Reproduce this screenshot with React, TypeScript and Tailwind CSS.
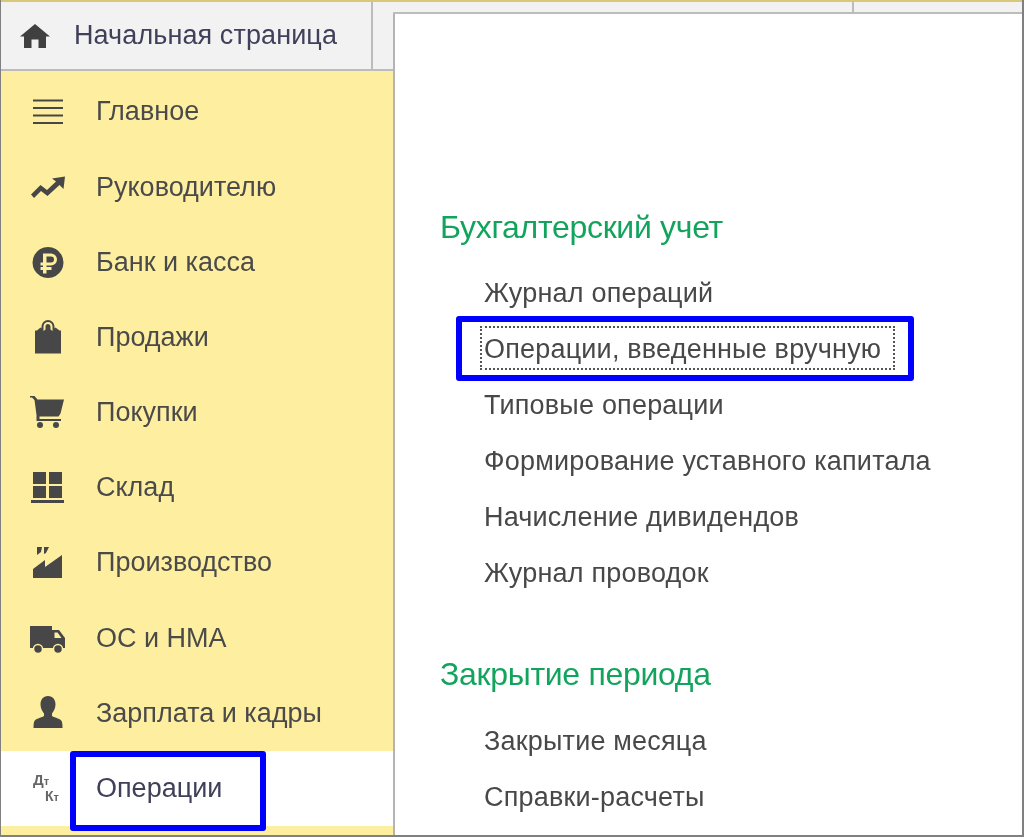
import type { ReactNode } from "react";

const iconClass = "w-[36px] h-[36px] fill-[#474747]";

const MenuIcon = () => (
  <svg viewBox="0 0 36 36" className={iconClass}>
    <rect x="3" y="5.5" width="30" height="2" />
    <rect x="3" y="13" width="30" height="2" />
    <rect x="3" y="20.5" width="30" height="2" />
    <rect x="3" y="28" width="30" height="2" />
  </svg>
);

const TrendIcon = () => (
  <svg viewBox="0 0 36 36" className={iconClass}>
    <path d="M1 25.5 L10.5 16 L17 21 L26 12.5 L22 9.5 L35 7.5 L33.5 20 L29.5 16 L17.5 27 L11 22 L4 29 Z" />
  </svg>
);

const RubleIcon = () => (
  <svg viewBox="0 0 36 36" className={iconClass}>
    <path
      fillRule="evenodd"
      d="M18 3 a15.5 15.5 0 1 0 0.01 0 Z M13 9.5 h8 a6 6 0 0 1 0 12 h-4.5 v1.5 h5 v3 h-5 v3.5 h-3.5 v-3.5 h-2.5 v-3 h2.5 v-1.500 h-2.500 v-3 h2.500 Z M16.500 12.500 v6 h4.500 a3 3 0 0 0 0 -6 Z"
    />
  </svg>
);

const BagIcon = () => (
  <svg viewBox="0 0 36 36" className={iconClass}>
    <path
      fillRule="evenodd"
      d="M11.500 9.500 v-2 a6.500 6.500 0 0 1 13 0 v2 l1 -1 l4 3 h1.500 v23 h-26 v-23 h2 l3.500 -3 Z M13.500 12 l2 -1.500 v-3 a2.500 2.500 0 0 1 5 0 v3 l2 1.500 v-4.500 a4.500 4.500 0 0 0 -9 0 Z"
    />
  </svg>
);

const CartIcon = () => (
  <svg viewBox="0 0 36 36" className={iconClass}>
    <path d="M0 2 h4.500 l3 3.500 h26.500 l-3.500 14 l-2 3 h-19 v2.500 h21.500 v2 h-24.500 v-6 l-2 -15 l-2.500 -2.500 h-2 Z" />
    <circle cx="10" cy="31" r="3" />
    <circle cx="26" cy="31" r="3" />
  </svg>
);

const GridIcon = () => (
  <svg viewBox="0 0 36 36" className={iconClass}>
    <rect x="3" y="2" width="13" height="12" />
    <rect x="19" y="2" width="13" height="12" />
    <rect x="3" y="16" width="13" height="12" />
    <rect x="19" y="16" width="13" height="12" />
    <rect x="1" y="30" width="33" height="3" />
  </svg>
);

const FactoryIcon = () => (
  <svg viewBox="0 0 36 36" className={iconClass}>
    <path d="M3 33 v-9 l12 -9 v7 l17 -12 v23 Z" />
    <path d="M7 2 h5 l-1 5 l-4 3 Z" />
    <path d="M14 2 h5 l-3 6 l-2 1 Z" />
  </svg>
);

const TruckIcon = () => (
  <svg viewBox="0 0 36 36" className={iconClass}>
    <path
      fillRule="evenodd"
      d="M0 6 h22 v4 h7 l6 8 v10 h-35 Z M24.500 12.500 v5.500 h7 l-4 -5.500 Z"
    />
    <circle cx="8" cy="29" r="4.500" stroke="#fdeea0" strokeWidth="1.500" />
    <circle cx="28" cy="29" r="4.500" stroke="#fdeea0" strokeWidth="1.500" />
  </svg>
);

const PersonIcon = () => (
  <svg viewBox="0 0 36 36" className={iconClass}>
    <path d="M18 1 c5 0 7.500 4 7.500 8.500 c0 4 -2 7 -3.500 9 v2.500 c3 2 9 2.500 10 6 c0.500 2 0.500 4 0.500 6 h-29 c0 -2 0 -4 0.500 -6 c1 -3.500 7 -4 10 -6 v-2.500 c-1.500 -2 -3.500 -5 -3.500 -9 c0 -4.500 2.500 -8.500 7.500 -8.500 Z" />
  </svg>
);

const DtKtIcon = () => (
  <div className="w-[36px] h-[36px] relative font-['Liberation_Sans',sans-serif] font-bold text-[#666666] leading-none">
    <span className="absolute left-[3px] top-[2px] text-[15px]">Д<span className="text-[11px]">т</span></span>
    <span className="absolute left-[15px] top-[19px] text-[14px]">К<span className="text-[11px]">т</span></span>
  </div>
);

const sidebarItems: { label: string; icon: ReactNode; active?: boolean }[] = [
  { label: "Главное", icon: <MenuIcon /> },
  { label: "Руководителю", icon: <TrendIcon /> },
  { label: "Банк и касса", icon: <RubleIcon /> },
  { label: "Продажи", icon: <BagIcon /> },
  { label: "Покупки", icon: <CartIcon /> },
  { label: "Склад", icon: <GridIcon /> },
  { label: "Производство", icon: <FactoryIcon /> },
  { label: "ОС и НМА", icon: <TruckIcon /> },
  { label: "Зарплата и кадры", icon: <PersonIcon /> },
  { label: "Операции", icon: <DtKtIcon />, active: true },
];

const SectionLink = ({ children, focused }: { children: string; focused?: boolean }) => (
  <div className="h-[56px] flex items-center pl-[44px] text-[27px] text-[#484848] tracking-[0.2px] relative">
    {focused && (
      <>
        <div className="absolute left-[16px] top-[-5px] w-[458px] h-[65px] border-[6px] border-[#0000ff] rounded-[3px]" />
        <div className="absolute left-[40px] top-[5px] w-[415px] h-[44px] border-2 border-dotted border-[#555555]" />
      </>
    )}
    <span className="relative">{children}</span>
  </div>
);

const SectionTitle = ({ children }: { children: string }) => (
  <div className="text-[32px] leading-[40px] text-[#12a45c] tracking-[-0.3px]">{children}</div>
);

export default function App() {
  return (
    <div className="w-[1024px] h-[837px] flex overflow-hidden bg-white border-l border-r-2 border-b-2 border-[#808080] font-['Liberation_Sans',sans-serif] blur-[0.4px]">
      <div className="w-[392px] shrink-0 flex flex-col">
        <div className="h-[71px] shrink-0 flex bg-[#f2f2f2] border-t-2 border-t-[#d8c878] border-b-2 border-b-[#bcbcbc]">
          <div className="w-[372px] flex items-center border-r-2 border-[#bcbcbc]">
            <svg viewBox="0 0 32 26" className="w-[32px] h-[26px] ml-[18px] fill-[#404040]">
              <path d="M16 1 L31 13.500 H27 V25 H19.500 V16.500 H12.500 V25 H5 V13.500 H1 Z" />
            </svg>
            <span className="ml-[23px] text-[27px] text-[#40405a] tracking-[0.1px]">Начальная страница</span>
          </div>
        </div>
        <div className="flex-1 bg-[#fdeea0] pt-[3px] flex flex-col">
          {sidebarItems.map((item) => (
            <div
              key={item.label}
              className={`h-[75.2px] shrink-0 flex items-center pl-[29px] relative ${item.active ? "bg-white" : ""}`}
            >
              {item.icon}
              <span className={`ml-[30px] text-[27px] relative ${item.active ? "text-[#40405a]" : "text-[#4a4a4a]"}`}>
                {item.label}
              </span>
              {item.active && (
                <div className="absolute left-[69px] top-0 w-[196px] h-[80px] border-[6px] border-[#0000ff] rounded-[3px]" />
              )}
            </div>
          ))}
        </div>
      </div>
      <div className="flex-1 flex flex-col min-w-0">
        <div className="h-[14px] shrink-0 flex bg-[#f2f2f2] border-t-2 border-t-[#d8c878] border-b-2 border-b-[#bcbcbc]">
          <div className="w-[461px] border-r-2 border-[#bcbcbc]" />
        </div>
        <div className="flex-1 border-l-2 border-[#b4b4b4] pl-[45px] pt-[193px]">
          <SectionTitle>Бухгалтерский учет</SectionTitle>
          <div className="mt-[18px]">
            <SectionLink>Журнал операций</SectionLink>
            <SectionLink focused>Операции, введенные вручную</SectionLink>
            <SectionLink>Типовые операции</SectionLink>
            <SectionLink>Формирование уставного капитала</SectionLink>
            <SectionLink>Начисление дивидендов</SectionLink>
            <SectionLink>Журнал проводок</SectionLink>
          </div>
          <div className="mt-[53px]">
            <SectionTitle>Закрытие периода</SectionTitle>
          </div>
          <div className="mt-[19px]">
            <SectionLink>Закрытие месяца</SectionLink>
            <SectionLink>Справки-расчеты</SectionLink>
          </div>
        </div>
      </div>
    </div>
  );
}
